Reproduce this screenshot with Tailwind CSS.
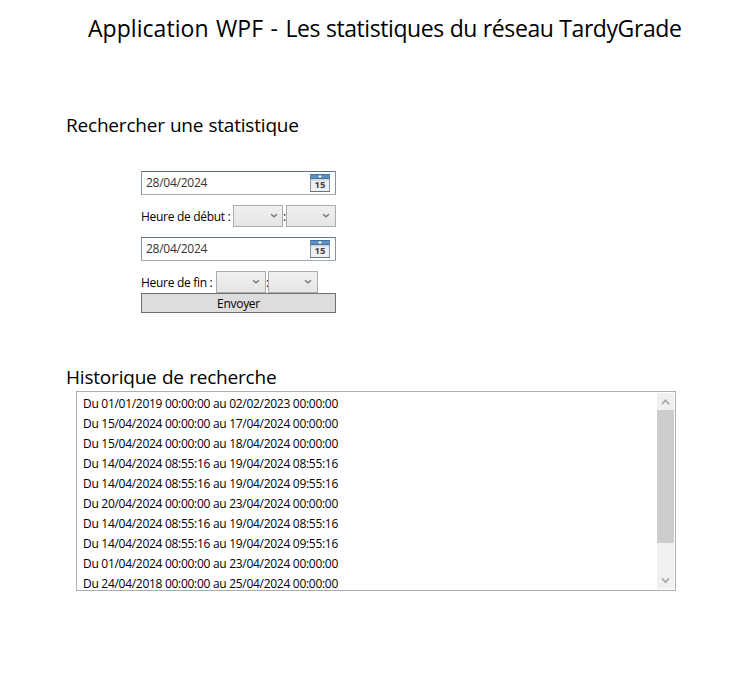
<!DOCTYPE html>
<html lang="fr">
<head>
<meta charset="utf-8">
<title>Les statistiques du réseau TardyGrade</title>
<script src="https://cdn.jsdelivr.net/npm/@tailwindcss/browser@4"></script>
</head>
<body class="bg-white text-black font-['Open_Sans','Noto_Sans',sans-serif]">
<svg class="hidden">
  <symbol id="calendar" viewBox="0 0 20 18">
    <rect x="0.5" y="0.5" width="19" height="17" fill="#eef0f3" stroke="#8a9199"/>
    <rect x="0" y="0" width="20" height="5" fill="#5b90c2"/>
    <rect x="0" y="0" width="20" height="1" fill="#44709c"/>
    <rect x="0" y="4" width="20" height="1" fill="#41709f"/>
    <path d="M10 1v3M8.5 2.5h3" stroke="#fff" stroke-width="1.2"/>
    <rect x="1" y="5" width="18" height="2" fill="#d5dbe3"/>
    <rect x="0" y="17" width="20" height="1" fill="#6b747e"/>
  </symbol>
  <symbol id="chevron" viewBox="0 0 8 6"><path d="M1 1.2L4 3.8L7 1.2" fill="none" stroke="#777" stroke-width="1.4"/></symbol>
</svg>
<main class="w-[750px] h-[687px] overflow-hidden flex flex-col">
  <h1 class="ml-[88px] mt-[12px] h-8 leading-8 text-[23px] whitespace-nowrap"><span class="tracking-[0.05px] [word-spacing:1.4px]">Application WPF - </span><span class="tracking-[-0.42px] [word-spacing:0.3px]">Les statistiques du réseau TardyGrade</span></h1>
  <section class="ml-[66px] mt-[67px]">
    <h2 class="h-7 leading-7 text-[19px] whitespace-nowrap"><span class="tracking-[-0.2px] [word-spacing:0.4px]">Rechercher une statistique</span></h2>
    <form class="ml-[75px] mt-8 w-[195px] flex flex-col text-[12px] whitespace-nowrap">
      <div class="h-6 border border-[#a0abb6] border-t-[#5f7385] border-l-[#8594a2] border-r-[#8594a2] flex items-center justify-between pl-1 pr-[5px] text-[#333]">
        <span class="tracking-[-0.25px]">28/04/2024</span>
        <span class="relative w-5 h-[18px]"><svg class="w-5 h-[18px]"><use href="#calendar"/></svg><b class="absolute left-0 top-[6px] w-5 h-[10px] leading-[10px] text-center text-[9.5px] font-bold text-[#444]">15</b></span>
      </div>
      <div class="mt-[10px] h-[22px] flex items-center">
        <span class="w-[92px] pt-[2px] tracking-[-0.3px]">Heure de début :</span>
        <span class="w-[50px] h-[22px] border border-[#acacac] bg-linear-to-b from-[#f0f0f0] to-[#e5e5e5] flex justify-end pr-1 pt-[7px]"><svg class="w-2 h-1.5"><use href="#chevron"/></svg></span>
        <span class="w-[3px] pt-[2px]">:</span>
        <span class="w-[50px] h-[22px] border border-[#acacac] bg-linear-to-b from-[#f0f0f0] to-[#e5e5e5] flex justify-end pr-[5px] pt-[7px]"><svg class="w-2 h-1.5"><use href="#chevron"/></svg></span>
      </div>
      <div class="mt-[10px] h-6 border border-[#a0abb6] border-t-[#5f7385] border-l-[#8594a2] border-r-[#8594a2] flex items-center justify-between pl-1 pr-[5px] text-[#333]">
        <span class="tracking-[-0.25px]">28/04/2024</span>
        <span class="relative w-5 h-[18px]"><svg class="w-5 h-[18px]"><use href="#calendar"/></svg><b class="absolute left-0 top-[6px] w-5 h-[10px] leading-[10px] text-center text-[9.5px] font-bold text-[#444]">15</b></span>
      </div>
      <div class="mt-[10px] h-[22px] flex items-center">
        <span class="w-[75px] pt-[2px] tracking-[-0.3px]">Heure de fin :</span>
        <span class="w-[50px] h-[22px] border border-[#acacac] bg-linear-to-b from-[#f0f0f0] to-[#e5e5e5] flex justify-end pr-[5px] pt-[7px]"><svg class="w-2 h-1.5"><use href="#chevron"/></svg></span>
        <span class="w-[2px] pt-[2px]">:</span>
        <span class="w-[50px] h-[22px] border border-[#acacac] bg-linear-to-b from-[#f0f0f0] to-[#e5e5e5] flex justify-end pr-[5px] pt-[7px]"><svg class="w-2 h-1.5"><use href="#chevron"/></svg></span>
      </div>
      <button type="button" class="h-5 border border-[#707070] bg-[#ddd] leading-[18px] pt-px tracking-[-0.3px]">Envoyer</button>
    </form>
  </section>
  <section class="ml-[66px] mt-[50px]">
    <h2 class="h-7 leading-7 text-[19px] whitespace-nowrap"><span class="tracking-[-0.2px] [word-spacing:0.6px]">Historique de recherche</span></h2>
    <div class="ml-[10px] w-[600px] h-[200px] border border-[#abadb3] flex justify-between p-px">
      <ul class="pl-[5px] pt-px text-[12px] leading-5 tracking-[-0.29px] whitespace-nowrap h-[197px]">
        <li>Du 01/01/2019 00:00:00 au 02/02/2023 00:00:00</li>
        <li>Du 15/04/2024 00:00:00 au 17/04/2024 00:00:00</li>
        <li>Du 15/04/2024 00:00:00 au 18/04/2024 00:00:00</li>
        <li>Du 14/04/2024 08:55:16 au 19/04/2024 08:55:16</li>
        <li>Du 14/04/2024 08:55:16 au 19/04/2024 09:55:16</li>
        <li>Du 20/04/2024 00:00:00 au 23/04/2024 00:00:00</li>
        <li>Du 14/04/2024 08:55:16 au 19/04/2024 08:55:16</li>
        <li>Du 14/04/2024 08:55:16 au 19/04/2024 09:55:16</li>
        <li>Du 01/04/2024 00:00:00 au 23/04/2024 00:00:00</li>
        <li>Du 24/04/2018 00:00:00 au 25/04/2024 00:00:00</li>
      </ul>
      <div class="w-[17px] h-[196px] bg-[#f0f0f0] flex flex-col items-center">
        <svg class="w-[17px] h-[17px] shrink-0" viewBox="0 0 17 17"><path d="M5 11.3L8.5 7.3L12 11.3" fill="none" stroke="#a3a3a3" stroke-width="1.6"/></svg>
        <div class="w-[17px] h-[133px] bg-[#cdcdcd]"></div>
        <svg class="w-[17px] h-[17px] shrink-0 mt-auto" viewBox="0 0 17 17"><path d="M5 6.3L8.5 10.3L12 6.3" fill="none" stroke="#a3a3a3" stroke-width="1.6"/></svg>
      </div>
    </div>
  </section>
</main>
</body>
</html>
